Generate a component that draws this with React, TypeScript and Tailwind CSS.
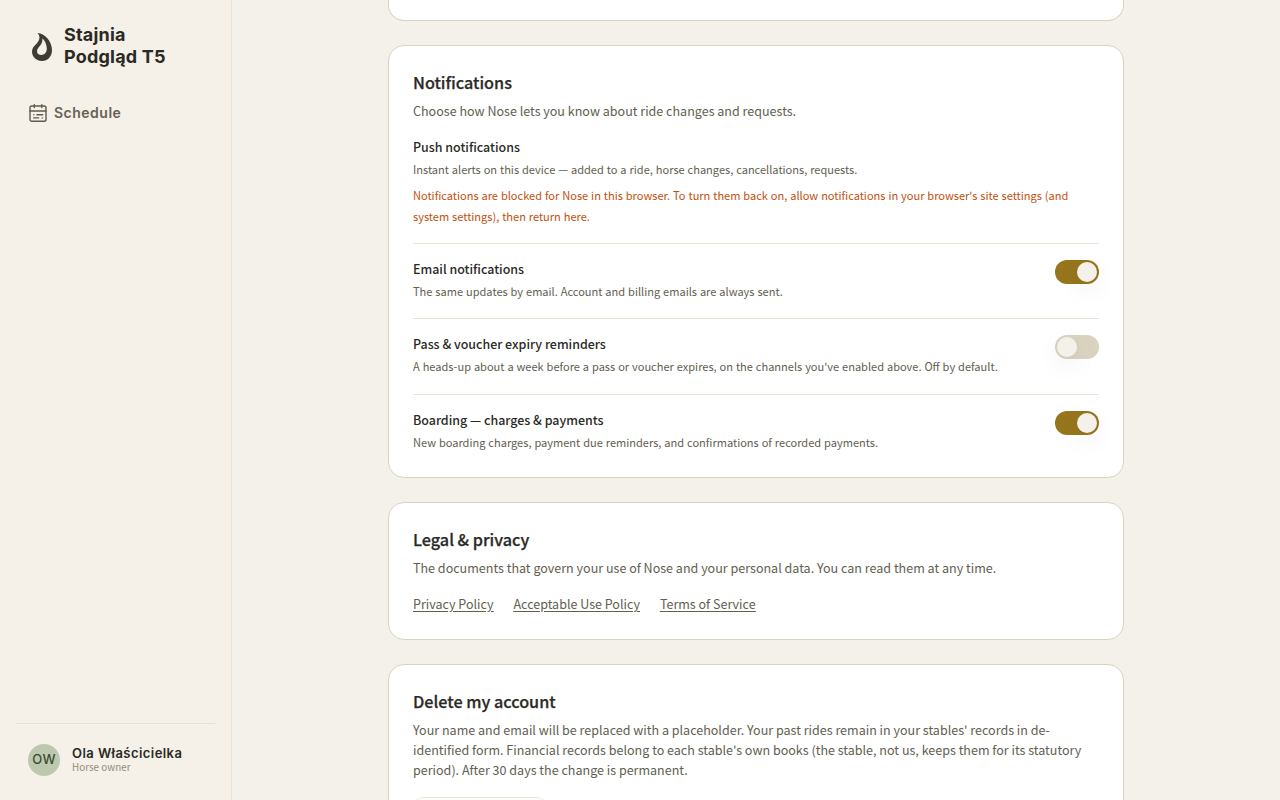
import type { ReactNode } from "react";

function FlameLogo() {
  return (
    <svg width="20" height="28" viewBox="0 0 20 28" className="mt-[2px] shrink-0">
      <path
        fillRule="evenodd"
        fill="#3d3d35"
        d="M5.600 0C12.500 .4 20 8 20 17.300C20 23.500 15.800 28 10 28C4.200 28 0 24 0 18.600C0 12.300 7.500 10.500 7.500 4.500C7.500 2.600 6.600 1.200 5.600 0ZM10.300 5.200C11.400 12 5 14 5 18.200C5 20.700 6.900 22 9.200 22C12.500 22 14.800 19.600 14.800 15.600C14.800 11.600 12.900 7.600 10.300 5.200Z"
      />
    </svg>
  );
}

function CalendarIcon() {
  return (
    <svg width="18" height="20" viewBox="0 0 18 20" fill="none" stroke="#5f5b4e" strokeWidth="1.4" strokeLinecap="round" className="shrink-0">
      <rect x="1" y="3" width="16" height="15.300" rx="1.800" />
      <path d="M1 8H17M5.300 1.600V4.500M12.800 1.600V4.500M4.800 11.700H4.900M7.900 11.700H13.700M4.600 14.900H9.600M13.200 14.900H13.400" />
    </svg>
  );
}

function Card({ title, description, children }: { title: string; description: string; children: ReactNode }) {
  return (
    <section className="rounded-2xl border border-[#dad3c0] bg-white p-6">
      <h2 className="h-[27px] text-[16.2px] leading-[24px] font-medium text-[#2a2a25] [-webkit-text-stroke:0.25px_#2a2a25]">{title}</h2>
      <p className="mt-1 text-[12.54px] leading-5 text-[#625e50]">{description}</p>
      {children}
    </section>
  );
}

function Switch({ on }: { on: boolean }) {
  return (
    <button
      role="switch"
      aria-checked={on}
      className={
        on
          ? "flex h-6 w-11 shrink-0 items-center justify-end rounded-full bg-[#96751d] p-0.5"
          : "flex h-6 w-11 shrink-0 items-center justify-start rounded-full bg-[#dad3c0] p-0.5"
      }
    >
      <span className="size-5 rounded-full bg-[#f4f1ea] shadow-[0_8px_24px_rgba(42,42,37,0.08)]" />
    </button>
  );
}

function Row({ title, text, on }: { title: string; text: string; on: boolean }) {
  return (
    <div className="flex items-start justify-between border-t border-[#ebe3d5] py-4 last:pb-0">
      <div>
        <h3 className="h-5 text-[12.45px] leading-[18.500px] font-medium text-[#2a2a25]">{title}</h3>
        <p className="mt-0.5 h-[20.500px] text-[11.04px] leading-[19px] [word-spacing:0.46px] text-[#625e50]">{text}</p>
      </div>
      <Switch on={on} />
    </div>
  );
}

export default function App() {
  return (
    <div className="flex h-screen overflow-hidden bg-[#f4f1ea] font-['Noto_Sans_CJK_SC',sans-serif]">
      <aside className="flex w-58 shrink-0 flex-col border-r border-[#e9e3d5] bg-[#f5f0e8] px-4 font-[Inter,sans-serif]">
        <div className="flex items-center gap-3 pt-6 pl-4">
          <FlameLogo />
          <div className="text-[18px] leading-[22px] font-bold text-[#2a2a25]">
            <div className="w-fit tracking-[0.2px]">Stajnia</div>
            <div className="w-fit tracking-[0.2px]">Podgląd T5</div>
          </div>
        </div>
        <nav className="mt-[35px] flex items-center gap-[7px] pl-[13px]">
          <CalendarIcon />
          <span className="text-[14px] leading-5 font-semibold tracking-[0.5px] text-[#656154]">Schedule</span>
        </nav>
        <div className="mt-auto flex h-[77px] items-start gap-3 border-t border-[#e9e3d0] pt-5 pl-3">
          <div className="flex size-8 items-center justify-center rounded-full bg-[#bcc9ae] text-[13px] font-medium tracking-[0.2px] text-[#3d4a35]">OW</div>
          <div className="pt-px">
            <div className="w-fit text-[13px] leading-4 font-semibold tracking-[0.44px] text-[#2a2a25]">Ola Właścicielka</div>
            <div className="w-fit font-['Noto_Sans_CJK_SC',sans-serif] text-[9.9px] leading-3 text-[#948d7b]">Horse owner</div>
          </div>
        </div>
      </aside>
      <main className="flex flex-1 justify-center overflow-hidden">
        <div className="flex w-184 shrink-0 flex-col gap-6">
          <div className="h-[21px] shrink-0 rounded-b-2xl border border-t-0 border-[#dad3c0] bg-white" />
          <Card title="Notifications" description="Choose how Nose lets you know about ride changes and requests.">
            <div className="pt-4 pb-4">
              <h3 className="text-[12.45px] leading-5 font-medium text-[#2a2a25]">Push notifications</h3>
              <p className="mt-0.5 h-[20.500px] text-[11.04px] leading-[21px] [word-spacing:0.46px] text-[#625e50]">
                Instant alerts on this device — added to a ride, horse changes, cancellations, requests.
              </p>
              <p className="mt-[5px] h-[42.200px] text-[11.04px] leading-[21px] [word-spacing:0.45px] text-[#c2500c]">
                Notifications are blocked for Nose in this browser. To turn them back on, allow notifications in your browser's site settings (and
                <br />
                system settings), then return here.
              </p>
            </div>
            <Row title="Email notifications" text="The same updates by email. Account and billing emails are always sent." on />
            <Row title="Pass & voucher expiry reminders" text="A heads-up about a week before a pass or voucher expires, on the channels you've enabled above. Off by default." on={false} />
            <Row title="Boarding — charges & payments" text="New boarding charges, payment due reminders, and confirmations of recorded payments." on />
          </Card>
          <Card title="Legal & privacy" description="The documents that govern your use of Nose and your personal data. You can read them at any time.">
            <div className="mt-4 flex h-[21px] gap-5 text-[12.53px] leading-5 text-[#625e50] underline underline-offset-2">
              <a href="#">Privacy Policy</a>
              <a href="#">Acceptable Use Policy</a>
              <a href="#">Terms of Service</a>
            </div>
          </Card>
          <Card
            title="Delete my account"
            description="Your name and email will be replaced with a placeholder. Your past rides remain in your stables' records in de-identified form. Financial records belong to each stable's own books (the stable, not us, keeps them for its statutory period). After 30 days the change is permanent."
          >
            <button aria-label="Delete account" className="mt-[17px] h-11 w-[134px] rounded-[10px] border border-[#ebe3d5]" />
          </Card>
        </div>
      </main>
    </div>
  );
}
